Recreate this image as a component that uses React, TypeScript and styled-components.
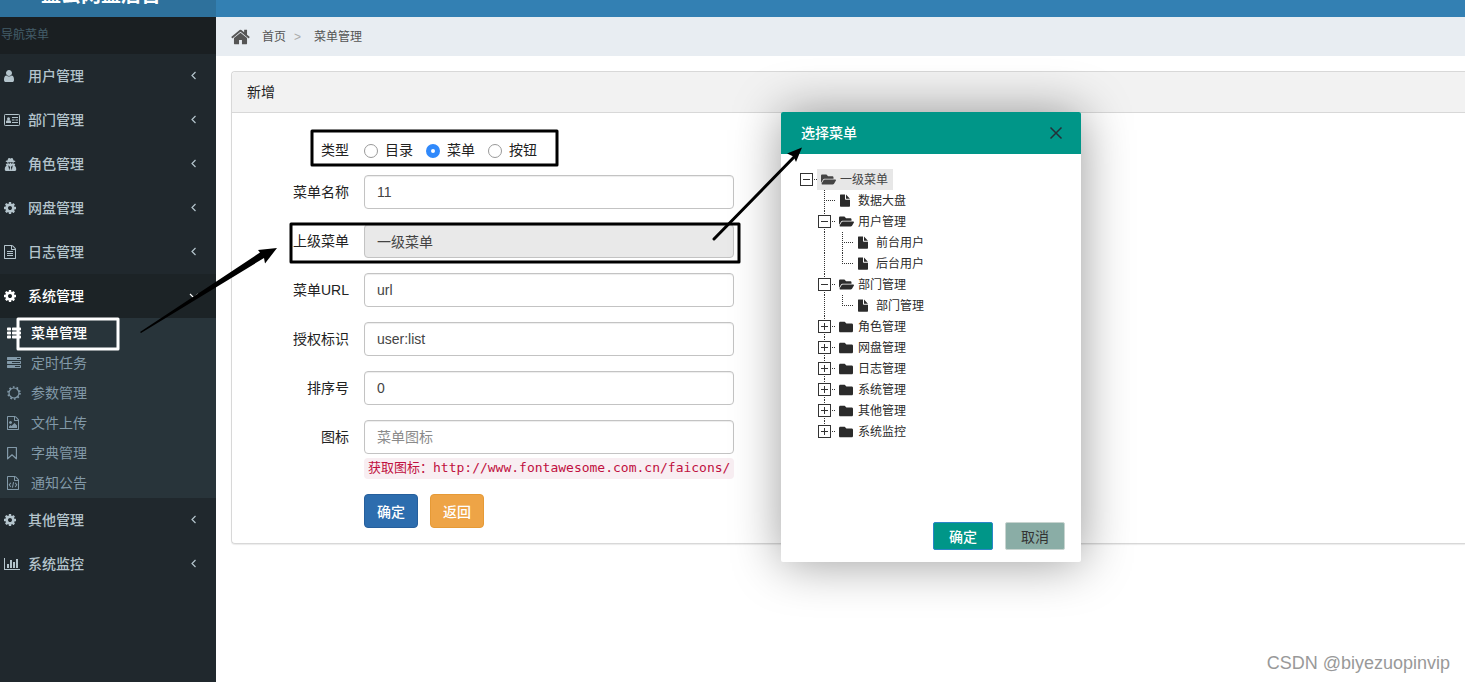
import React, { useState } from 'react';
import styled, { createGlobalStyle, css } from 'styled-components';
import { FaFolder, FaFolderOpen, FaUserSecret } from 'react-icons/fa';

const sans = `"Liberation Sans", "Noto Sans CJK SC", sans-serif`;

const GlobalStyle = createGlobalStyle`
  *, *::before, *::after { box-sizing: border-box; }
  body {
    margin: 0;
    background: #fff;
    color: #222;
    font-family: ${sans};
    font-size: 14px;
    line-height: 20px;
  }
  button, input { font-family: inherit; }
  ul { list-style: none; margin: 0; padding: 0; }
  a { color: inherit; text-decoration: none; }
`;

/* ---------- icons ---------- */

const Glyph = styled.svg<{ $w?: number; $h?: number }>`
  display: block;
  flex: none;
  width: ${p => p.$w ?? 14}px;
  height: ${p => p.$h ?? 14}px;
  fill: currentColor;
`;

const PAGE =
  'M1596 380q28 28 48 76t20 88v1152q0 40-28 68t-68 28h-1344q-40 0-68-28t-28-68v-1600q0-40 28-68t68-28h896q40 0 88 20t76 48zm-444-244v376h376q-10-29-22-41l-313-313q-12-12-41-22zm384 1528v-1024h-416q-40 0-68-28t-28-68v-416h-768v1536h1280z';

const icons: Record<string, React.ReactNode> = {
  user: (
    <Glyph viewBox="256 0 1536 1792" $w={12}>
      <path d="M1536 1399q0 109-62.5 187t-150.5 78h-854q-88 0-150.5-78t-62.5-187q0-85 8.5-160.5t31.5-152 58.5-131 94-89 134.5-34.5q131 128 313 128t313-128q76 0 134.5 34.5t94 89 58.5 131 31.5 152 8.5 160.5zm-256-887q0 159-112.5 271.5t-271.5 112.5-271.5-112.5-112.5-271.5 112.5-271.5 271.5-112.5 271.5 112.5 112.5 271.5z" />
    </Glyph>
  ),
  cog: (
    <Glyph viewBox="128 0 1536 1792" $w={12}>
      <path d="M1152 896q0-106-75-181t-181-75-181 75-75 181 75 181 181 75 181-75 75-181zm512-109v222q0 12-8 23t-20 13l-185 28q-19 54-39 91 35 50 107 138 10 12 10 25t-9 23q-27 37-99 108t-94 71q-12 0-26-9l-138-108q-44 23-91 38-16 136-29 186-7 28-36 28h-222q-14 0-24.5-8.5t-11.5-21.5l-28-184q-49-16-90-37l-141 107q-10 9-25 9-14 0-25-11-126-114-165-168-7-10-7-23 0-12 8-23 15-21 51-66.5t54-70.5q-27-50-41-99l-183-27q-13-2-21-12.5t-8-23.5v-222q0-12 8-23t19-13l186-28q14-46 39-92-40-57-107-138-10-12-10-24 0-10 9-23 26-36 98.5-107.5t94.5-71.5q13 0 26 10l138 107q44-23 91-38 16-136 29-186 7-28 36-28h222q14 0 24.5 8.5t11.5 21.5l28 184q49 16 90 37l142-107q9-9 24-9 13 0 25 10 129 119 165 170 7 8 7 22 0 12-8 23-15 21-51 66.5t-54 70.5q26 50 41 98l183 28q13 2 21 12.5t8 23.5z" />
    </Glyph>
  ),
  text: (
    <Glyph viewBox="128 0 1536 1792" $w={12}>
      <path d={PAGE} />
      <path d="M512 768h768v128h-768zM512 1024h768v128h-768zM512 1280h768v128h-768z" />
    </Glyph>
  ),
  image: (
    <Glyph viewBox="128 0 1536 1792" $w={12}>
      <path d={PAGE} />
      <path d="M1408 1216v320h-1024v-192l192-192 128 128 384-384zM576 1024q-80 0-136-56t-56-136 56-136 136-56 136 56 56 136-56 136-136 56z" />
    </Glyph>
  ),
  code: (
    <Glyph viewBox="128 0 1536 1792" $w={12}>
      <path d={PAGE} />
      <path d="M620 860L410 1130l210 270M1172 860l210 270-210 270M970 780L820 1480" fill="none" stroke="currentColor" strokeWidth="130" />
    </Glyph>
  ),
  bookmark: (
    <Glyph viewBox="0 0 12 14" $w={12}>
      <path d="M.6 1.500h8.800v11.300L5 8.800.6 12.800z" fill="none" stroke="currentColor" strokeWidth="1.200" strokeLinejoin="round" />
    </Glyph>
  ),
  list: (
    <Glyph viewBox="0 0 14 14">
      <rect x="0" y="1.500" width="4" height="3" rx=".7" />
      <rect x="5" y="1.500" width="9" height="3" rx=".7" />
      <rect x="0" y="5.500" width="4" height="3" rx=".7" />
      <rect x="5" y="5.500" width="9" height="3" rx=".7" />
      <rect x="0" y="9.500" width="4" height="3" rx=".7" />
      <rect x="5" y="9.500" width="9" height="3" rx=".7" />
    </Glyph>
  ),
  tasks: (
    <Glyph viewBox="0 0 1792 1792">
      <path d="M1024 1408h640v-128h-640v128zm-384-512h1024v-128h-1024v128zm640-512h384v-128h-384v128zm512 832v256q0 26-19 45t-45 19h-1664q-26 0-45-19t-19-45v-256q0-26 19-45t45-19h1664q26 0 45 19t19 45zm0-512v256q0 26-19 45t-45 19h-1664q-26 0-45-19t-19-45v-256q0-26 19-45t45-19h1664q26 0 45 19t19 45zm0-512v256q0 26-19 45t-45 19h-1664q-26 0-45-19t-19-45v-256q0-26 19-45t45-19h1664q26 0 45 19t19 45z" />
    </Glyph>
  ),
  sun: (
    <Glyph viewBox="0 0 14 14">
      <circle cx="7" cy="7" r="5" fill="none" stroke="currentColor" strokeWidth="1.200" />
      <circle cx="7" cy="7" r="6" fill="none" stroke="currentColor" strokeWidth="1.600" strokeDasharray="1.700 2.070" />
    </Glyph>
  ),
  chart: (
    <Glyph viewBox="0 0 16 14" $w={16}>
      <path d="M0 1h1v11h15v1H0zM3 7h2v4H3zM6 3h2v8H6zM9 5h2v6H9zM12 2h2v9h-2z" />
    </Glyph>
  ),
  home: (
    <Glyph viewBox="64 192 1664 1408" $w={19} $h={16}>
      <path d="M1472 992v480q0 26-19 45t-45 19h-384v-384h-256v384h-384q-26 0-45-19t-19-45v-480q0-1 .5-3t.5-3l575-474 575 474q1 2 1 6zm223-69l-62 74q-8 9-21 11h-3q-13 0-21-7l-692-577-692 577q-12 8-24 7-13-2-21-11l-62-74q-8-10-7-23.500t11-21.500l719-599q32-26 76-26t76 26l244 204v-195q0-14 9-23t23-9h192q14 0 23 9t9 23v408l219 182q10 8 11 21.500t-7 23.500z" />
    </Glyph>
  ),
  file: (
    <Glyph viewBox="0 0 12 13" $w={12} $h={13}>
      <path d="M1.500.5H6V5q0 .8.800.8H11V12q0 .7-.7.7H1.700Q1 12.700 1 12V1Q1 .5 1.500.5zM7 .6L10.900 4.700H7z" />
    </Glyph>
  ),
  idcard: (
    <Glyph viewBox="0 0 16 14" $w={16}>
      <rect x=".5" y="1.500" width="15" height="11" rx=".8" fill="none" stroke="currentColor" />
      <circle cx="4.500" cy="5.700" r="1.500" />
      <path d="M2 10V8.800Q2 7.200 3.300 7.200H5.700Q7 7.200 7 8.800V10zM8 4h6v1H8zM8 6.500h2.500v1H8zM11.500 6.500H14v1h-2.500zM8 9h6v1H8z" />
    </Glyph>
  ),
  secret: <FaUserSecret size={13} />,
};

/* ---------- frame ---------- */

const Page = styled.div`
  position: relative;
  min-height: 100vh;
  display: flex;
  flex-direction: column;
  overflow: hidden;
`;

const TopBar = styled.header`
  display: flex;
  align-items: flex-end;
  height: 17px;
  overflow: hidden;
  background: #3380b3;
`;

const Logo = styled.a`
  width: 216px;
  padding-right: 14px;
  background: #2e719c;
  color: #fff;
  font-size: 20px;
  font-weight: 700;
  line-height: 44px;
  text-align: center;
`;

const Columns = styled.div`
  flex: 1;
  display: flex;
`;

const Sidebar = styled.nav`
  flex: none;
  width: 216px;
  background: #20282d;
`;

const NavTitle = styled.div`
  height: 37px;
  padding-left: 1px;
  background: #1a1f22;
  color: #435d69;
  font-size: 12px;
  line-height: 37px;
`;

const NavLink = styled.a<{ $active?: boolean }>`
  display: flex;
  align-items: center;
  height: 44px;
  padding: 0 16px 0 4px;
  font-weight: 500;
  color: ${p => (p.$active ? '#fff' : '#b4c4cc')};
  background: ${p => (p.$active ? '#1c2326' : 'transparent')};
`;

const IconSlot = styled.span`
  display: flex;
  flex: none;
  width: 24px;
`;

const NavText = styled.span`
  flex: 1;
`;

const SubList = styled.ul`
  background: #28343a;
`;

const SubLink = styled.a<{ $active?: boolean }>`
  display: flex;
  align-items: center;
  height: 30px;
  padding-left: 7px;
  font-weight: ${p => (p.$active ? 500 : 400)};
  color: ${p => (p.$active ? '#fff' : '#8299a8')};
`;

const Main = styled.main`
  flex: 1;
  min-width: 0;
`;

const Crumbs = styled.div`
  display: flex;
  align-items: center;
  height: 39px;
  padding-left: 15px;
  background: #e8edf2;
  color: #555;
  font-size: 12px;
`;

const CrumbHome = styled.a`
  display: flex;
  margin-right: 12px;
`;

const CrumbSep = styled.span`
  width: 28px;
  padding-left: 8px;
  color: #aaa;
`;

const Panel = styled.section`
  margin: 15px 0 0 15px;
  border: 1px solid #d8d8d8;
  border-right: 0;
  border-radius: 4px 0 0 4px;
  box-shadow: 0 1px 1px rgba(0, 0, 0, 0.08);
`;

const PanelHead = styled.h1`
  margin: 0;
  padding: 10px 15px;
  height: 41px;
  border-bottom: 1px solid #d8d8d8;
  border-radius: 4px 0 0 0;
  background: #f2f2f2;
  font-size: 14px;
  line-height: 20px;
  font-weight: 400;
`;

const Form = styled.form`
  display: flex;
  flex-direction: column;
  gap: 15px;
  padding: 20px 0 15px 15px;
`;

const Field = styled.div`
  display: grid;
  grid-template-columns: 102px 370px;
  column-gap: 15px;
  align-items: start;
`;

const Label = styled.label`
  padding-top: 7px;
  text-align: right;
`;

const TextBox = styled.input`
  width: 100%;
  height: 34px;
  padding: 6px 12px;
  border: 1px solid #c3c3c3;
  border-radius: 4px;
  background: ${p => (p.readOnly ? '#e9e9e9' : '#fff')};
  box-shadow: inset 0 1px 1px rgba(0, 0, 0, 0.075);
  color: #444;
  font-size: 14px;
  &::placeholder { color: #8a8a8a; opacity: 1; }
`;

const RadioRow = styled.div`
  display: flex;
  gap: 13px;
  padding-top: 7px;
`;

const RadioLabel = styled.label`
  display: flex;
  align-items: center;
  gap: 7px;
`;

const Radio = styled.input`
  appearance: none;
  width: 14px;
  height: 14px;
  margin: 2px 0 0;
  border: 1px solid #999;
  border-radius: 50%;
  background: #fff;
  &:checked {
    border: 5px solid #3089fb;
  }
`;

const Hint = styled.code`
  grid-column: 2;
  margin-top: 4px;
  padding: 0 4px;
  height: 21px;
  border-radius: 4px;
  background: #f8eef2;
  color: #c01040;
  font-family: "DejaVu Sans Mono", "Noto Sans CJK SC", monospace;
  font-size: 13px;
  line-height: 20px;
  white-space: nowrap;
`;

const Actions = styled.div`
  grid-column: 2;
  display: flex;
  gap: 12px;
`;

const ActionButton = styled.button<{ $tone: 'blue' | 'orange' }>`
  width: 54px;
  height: 34px;
  padding: 0;
  border: 1px solid ${p => (p.$tone === 'blue' ? '#265f9c' : '#e69a36')};
  border-radius: 4px;
  background: ${p => (p.$tone === 'blue' ? '#2d6dae' : '#eea446')};
  color: #fff;
  font-size: 14px;
  font-weight: 500;
`;

/* ---------- dialog ---------- */

const Dialog = styled.div`
  position: absolute;
  top: 112px;
  left: 781px;
  display: flex;
  flex-direction: column;
  width: 300px;
  height: 450px;
  border-radius: 2px;
  background: #fff;
  box-shadow: 1px 1px 50px rgba(0, 0, 0, 0.4);
`;

const DialogHead = styled.div`
  display: flex;
  align-items: center;
  justify-content: space-between;
  height: 42px;
  padding: 0 18px 0 20px;
  border-radius: 2px 2px 0 0;
  background: #009688;
`;

const DialogTitle = styled.h2`
  margin: 0;
  color: #fff;
  font-size: 14px;
  font-weight: 500;
`;

const CloseButton = styled.button`
  display: flex;
  padding: 0;
  border: 0;
  background: none;
  color: #243038;
`;

const DialogBody = styled.div`
  flex: 1;
  padding: 15px 18px;
`;

const DialogFoot = styled.div`
  display: flex;
  justify-content: flex-end;
  gap: 12px;
  padding: 0 16px 12px;
`;

const DialogButton = styled.button<{ $primary?: boolean }>`
  width: 60px;
  height: 28px;
  padding: 0;
  border: 1px solid #c8d4d0;
  border-radius: 2px;
  background: #8aada6;
  color: #333;
  font-size: 14px;
  ${p =>
    p.$primary &&
    css`
      border-color: #2a86c8;
      background: #009688;
      color: #fff;
      font-weight: 500;
    `}
`;

const Row = styled.div`
  display: flex;
  align-items: center;
  height: 21px;
  font-size: 12px;
`;

const Guide = styled.svg`
  display: block;
  flex: none;
  width: 18px;
  height: 21px;
  fill: none;
  stroke: #333;
`;

const Node = styled.span<{ $selected?: boolean }>`
  display: flex;
  align-items: center;
  height: 21px;
  padding: 0 5px 0 4px;
  background: ${p => (p.$selected ? '#e7e7e7' : 'transparent')};
  color: ${p => (p.$selected ? '#444' : '#2b2b2b')};
`;

const NodeIcon = styled.span`
  display: flex;
  width: 19px;
`;

/* blank: empty, line: passing line, tee/end: leaf connectors, minus/plus: toggles
   ("Last" has no line below, "Root" has no line above or below) */
type GuideKind = 'blank' | 'line' | 'tee' | 'end' | 'minusRoot' | 'minus' | 'plus' | 'plusLast';

function GuideCell({ kind }: { kind: GuideKind }) {
  const toggle = kind.startsWith('minus') || kind.startsWith('plus');
  const above = kind !== 'blank' && kind !== 'minusRoot';
  const below = kind === 'line' || kind === 'tee' || kind === 'minus' || kind === 'plus';
  const arm = kind !== 'blank' && kind !== 'line';
  return (
    <Guide viewBox="0 0 18 21" aria-hidden="true">
      <g strokeDasharray="1 1">
        {above && <path d="M7.500 0V11" />}
        {below && <path d="M7.500 10V21" />}
        {arm && <path d="M7 10.500H18" />}
      </g>
      {toggle && <rect x="1.500" y="4.500" width="12" height="12" fill="#fff" />}
      {toggle && <path d="M4 10.500h7" />}
      {kind.startsWith('plus') && <path d="M7.500 7v7" />}
    </Guide>
  );
}

type TreeRow = { text: string; icon: 'open' | 'closed' | 'file'; guides: GuideKind[] };

const tree: TreeRow[] = [
  { text: '一级菜单', icon: 'open', guides: ['minusRoot'] },
  { text: '数据大盘', icon: 'file', guides: ['blank', 'tee'] },
  { text: '用户管理', icon: 'open', guides: ['blank', 'minus'] },
  { text: '前台用户', icon: 'file', guides: ['blank', 'line', 'tee'] },
  { text: '后台用户', icon: 'file', guides: ['blank', 'line', 'end'] },
  { text: '部门管理', icon: 'open', guides: ['blank', 'minus'] },
  { text: '部门管理', icon: 'file', guides: ['blank', 'line', 'end'] },
  { text: '角色管理', icon: 'closed', guides: ['blank', 'plus'] },
  { text: '网盘管理', icon: 'closed', guides: ['blank', 'plus'] },
  { text: '日志管理', icon: 'closed', guides: ['blank', 'plus'] },
  { text: '系统管理', icon: 'closed', guides: ['blank', 'plus'] },
  { text: '其他管理', icon: 'closed', guides: ['blank', 'plus'] },
  { text: '系统监控', icon: 'closed', guides: ['blank', 'plusLast'] },
];

/* ---------- notes drawn over the page ---------- */

const Notes = styled.svg`
  position: absolute;
  top: 0;
  left: 0;
  width: 820px;
  height: 400px;
  pointer-events: none;
`;

const Watermark = styled.div`
  position: absolute;
  right: 15px;
  bottom: 9px;
  color: #999;
  font-size: 18px;
`;

/* ---------- data ---------- */

const nav = [
  { text: '用户管理', icon: 'user' },
  { text: '部门管理', icon: 'idcard' },
  { text: '角色管理', icon: 'secret' },
  { text: '网盘管理', icon: 'cog' },
  { text: '日志管理', icon: 'text' },
  {
    text: '系统管理',
    icon: 'cog',
    children: [
      { text: '菜单管理', icon: 'list' },
      { text: '定时任务', icon: 'tasks' },
      { text: '参数管理', icon: 'sun' },
      { text: '文件上传', icon: 'image' },
      { text: '字典管理', icon: 'bookmark' },
      { text: '通知公告', icon: 'code' },
    ],
  },
  { text: '其他管理', icon: 'cog' },
  { text: '系统监控', icon: 'chart' },
];

const fields = [
  { id: 'name', label: '菜单名称', value: '11' },
  { id: 'parent', label: '上级菜单', value: '一级菜单', readOnly: true },
  { id: 'url', label: '菜单URL', value: 'url' },
  { id: 'perms', label: '授权标识', value: 'user:list' },
  { id: 'order', label: '排序号', value: '0' },
];

export default function App() {
  const [type, setType] = useState('菜单');
  return (
    <Page>
      <GlobalStyle />
      <TopBar>
        <Logo href="#">蓝云网盘后台</Logo>
      </TopBar>
      <Columns>
        <Sidebar>
          <NavTitle>导航菜单</NavTitle>
          <ul>
            {nav.map(item => (
              <li key={item.text}>
                <NavLink href="#" $active={!!item.children}>
                  <IconSlot>{icons[item.icon]}</IconSlot>
                  <NavText>{item.text}</NavText>
                  <Glyph viewBox="0 0 12 12" $w={12} $h={12}>
                    <path
                      d={item.children ? 'M2 4l4 4 4-4' : 'M7.500 2L4 5.500l3.500 3.500'}
                      fill="none"
                      stroke="currentColor"
                      strokeWidth="1.200"
                    />
                  </Glyph>
                </NavLink>
                {item.children && (
                  <SubList>
                    {item.children.map((sub, i) => (
                      <li key={sub.text}>
                        <SubLink href="#" $active={i === 0}>
                          <IconSlot>{icons[sub.icon]}</IconSlot>
                          {sub.text}
                        </SubLink>
                      </li>
                    ))}
                  </SubList>
                )}
              </li>
            ))}
          </ul>
        </Sidebar>

        <Main>
          <Crumbs>
            <CrumbHome href="#" aria-label="首页">{icons.home}</CrumbHome>
            <a href="#">首页</a>
            <CrumbSep>&gt;</CrumbSep>
            <span>菜单管理</span>
          </Crumbs>
          <Panel>
            <PanelHead>新增</PanelHead>
            <Form onSubmit={e => e.preventDefault()}>
              <Field role="radiogroup" aria-labelledby="type-label">
                <Label as="span" id="type-label">类型</Label>
                <RadioRow>
                  {['目录', '菜单', '按钮'].map(t => (
                    <RadioLabel key={t}>
                      <Radio type="radio" name="type" checked={type === t} onChange={() => setType(t)} />
                      {t}
                    </RadioLabel>
                  ))}
                </RadioRow>
              </Field>
              {fields.map(f => (
                <Field key={f.id}>
                  <Label htmlFor={f.id}>{f.label}</Label>
                  <TextBox id={f.id} defaultValue={f.value} readOnly={f.readOnly} />
                </Field>
              ))}
              <Field>
                <Label htmlFor="icon">图标</Label>
                <TextBox id="icon" placeholder="菜单图标" />
                <Hint>获取图标：http://www.fontawesome.com.cn/faicons/</Hint>
              </Field>
              <Field>
                <Actions>
                  <ActionButton $tone="blue">确定</ActionButton>
                  <ActionButton $tone="orange" type="button">返回</ActionButton>
                </Actions>
              </Field>
            </Form>
          </Panel>
        </Main>
      </Columns>

      <Watermark>CSDN @biyezuopinvip</Watermark>

      <Dialog role="dialog" aria-labelledby="dialog-title">
        <DialogHead>
          <DialogTitle id="dialog-title">选择菜单</DialogTitle>
          <CloseButton aria-label="关闭">
            <Glyph viewBox="0 0 14 14">
              <path d="M1.500 1.500l11 11M12.500 1.500l-11 11" stroke="currentColor" strokeWidth="1.500" />
            </Glyph>
          </CloseButton>
        </DialogHead>
        <DialogBody>
          {tree.map((row, i) => (
            <Row key={i}>
              {row.guides.map((g, j) => (
                <GuideCell key={j} kind={g} />
              ))}
              <Node $selected={i === 0}>
                <NodeIcon>
                  {row.icon === 'file' ? icons.file : row.icon === 'open' ? <FaFolderOpen size={15} /> : <FaFolder size={14} />}
                </NodeIcon>
                {row.text}
              </Node>
            </Row>
          ))}
        </DialogBody>
        <DialogFoot>
          <DialogButton $primary>确定</DialogButton>
          <DialogButton>取消</DialogButton>
        </DialogFoot>
      </Dialog>

      <Notes viewBox="0 0 820 400" aria-hidden="true">
        <g fill="none" strokeWidth="3" strokeLinejoin="round">
          <rect x="18" y="319" width="100" height="30" stroke="#fff" />
          <rect x="312" y="131" width="245" height="34" stroke="#000" />
          <rect x="291" y="224" width="448" height="38" stroke="#000" />
        </g>
        <path d="M140 332L260 252.500L258 250L277 248L265 263.500L264 258L141 333z" />
        <path d="M714 239L797 154" stroke="#000" strokeWidth="3" strokeLinecap="round" />
        <path d="M802 147.500L796 162L793.500 156.500L787 153.500z" />
      </Notes>
    </Page>
  );
}
